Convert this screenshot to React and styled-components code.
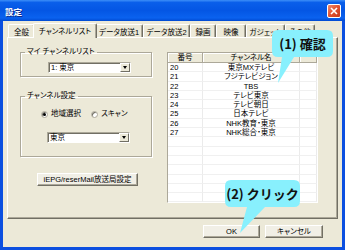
import React from 'react';
import styled, { createGlobalStyle } from 'styled-components';

const FONT = `"Liberation Sans", "Noto Sans CJK JP", sans-serif`;

const GlobalStyle = createGlobalStyle`
  html, body { margin: 0; padding: 0; background: #fff; }
  * { box-sizing: border-box; }
`;

const Window = styled.div`
  position: relative;
  width: 345px;
  height: 250px;
  display: flex;
  flex-direction: column;
  overflow: hidden;
  font-family: ${FONT};
  font-size: 7.5px;
  font-feature-settings: "palt";
  color: #000;
`;

const TitleBar = styled.div`
  height: 21px;
  flex: none;
  display: flex;
  align-items: center;
  justify-content: space-between;
  padding: 0 4px 0 5px;
  background: linear-gradient(#3d8ff8 0%, #0a5fea 12%, #0456e4 50%, #0a62ef 85%, #004ad2 100%);
`;

const Title = styled.span`
  color: #fff;
  font-weight: bold;
  font-size: 8.5px;
  font-family: "Noto Sans CJK JP", sans-serif;
  text-shadow: 1px 1px 0 #0a2a8a;
`;

const CloseButton = styled.div`
  width: 14px;
  height: 14px;
  border: 1px solid #fff;
  border-radius: 2px;
  background: linear-gradient(135deg, #f08a6c 0%, #e2512f 50%, #c53a1a 100%);
  display: flex;
  align-items: center;
  justify-content: center;
`;

const Frame = styled.div`
  flex: 1;
  display: flex;
  flex-direction: column;
  background: #ece9d8;
  border: 3px solid #0b4fe0;
  border-top: none;
  padding: 2px 4px 0 4px;
`;

const TabStrip = styled.div`
  height: 14px;
  display: flex;
  align-items: flex-end;
  padding-left: 1px;
  position: relative;
  z-index: 1;
`;

const Tab = styled.div`
  width: ${p => p.$w}px;
  height: ${p => (p.$active ? 15 : 13)}px;
  margin: ${p => (p.$active ? '0 -2px -1px -2px' : '0')};
  display: flex;
  align-items: center;
  justify-content: center;
  white-space: nowrap;
  background: #ece9d8;
  border-top: 1px solid #fff;
  border-left: 1px solid #fff;
  border-right: 1px solid #716f64;
  box-shadow: inset -1px 0 0 #aca899;
  border-radius: 2px 2px 0 0;
  position: relative;
  z-index: ${p => (p.$active ? 2 : 1)};
  padding-bottom: ${p => (p.$active ? 2 : 0)}px;
`;

const TabPanel = styled.div`
  height: 182px;
  display: flex;
  gap: 15px;
  padding: 10px 0 0 12px;
  border: 1px solid;
  border-color: #fff #716f64 #716f64 #fff;
  box-shadow: inset -1px -1px 0 #aca899;
`;

const LeftCol = styled.div`
  width: 132px;
  display: flex;
  flex-direction: column;
`;

const Group = styled.fieldset`
  margin: ${p => p.$mt || 0}px 0 0 0;
  padding: 0 0 ${p => p.$pb}px 0;
  border: 1px solid #aca899;
  box-shadow: inset 1px 1px 0 #fff, 1px 1px 0 #fff;
  min-width: 0;
`;

const Legend = styled.legend`
  margin-left: 4px;
  padding: 0 2px;
  line-height: 8px;
  font-size: 7.5px;
`;

const Select = styled.div`
  margin: ${p => p.$mt}px 0 0 ${p => p.$ml}px;
  width: 83px;
  height: 11px;
  display: flex;
  background: #fff;
  border: 1px solid;
  border-color: #aca899 #fff #fff #aca899;
  box-shadow: inset 1px 1px 0 #716f64;
`;

const SelectText = styled.span`
  flex: 1;
  padding-left: 2px;
  line-height: 9px;
`;

const SelectArrow = styled.div`
  width: 10px;
  height: 9px;
  background: #ece9d8;
  border: 1px solid;
  border-color: #fff #716f64 #716f64 #fff;
  display: flex;
  align-items: center;
  justify-content: center;
  &::after {
    content: '';
    border-left: 2.5px solid transparent;
    border-right: 2.5px solid transparent;
    border-top: 3px solid #000;
  }
`;

const RadioRow = styled.div`
  margin-top: 10px;
  height: 8px;
  display: flex;
  align-items: center;
  padding-left: 20px;
  gap: 10px;
`;

const RadioItem = styled.label`
  display: flex;
  align-items: center;
  gap: 3px;
  line-height: 8px;
`;

const RadioDot = styled.span`
  width: 7px;
  height: 7px;
  border-radius: 50%;
  background: #fff;
  border: 1px solid #aca899;
  box-shadow: inset 1px 1px 0 #716f64;
  display: flex;
  align-items: center;
  justify-content: center;
  &::after {
    content: '';
    width: 3px;
    height: 3px;
    border-radius: 50%;
    background: ${p => (p.$on ? '#000' : 'transparent')};
  }
`;

const Button = styled.div`
  width: ${p => p.$w}px;
  height: 13px;
  display: flex;
  align-items: center;
  justify-content: center;
  white-space: nowrap;
  background: #f1efe6;
  border: 1px solid;
  border-color: #fff #716f64 #716f64 #fff;
  box-shadow: inset -1px -1px 0 #aca899;
  margin-left: ${p => p.$ml || 0}px;
  margin-top: ${p => p.$mt || 0}px;
  line-height: 11px;
`;

const ListView = styled.div`
  margin-top: 4px;
  width: 151px;
  height: 151px;
  background: #fff;
  border: 1px solid;
  border-color: #aca899 #fff #fff #aca899;
  overflow: hidden;
`;

const Row = styled.div`
  display: grid;
  grid-template-columns: 35px 97px 1fr;
  height: ${p => (p.$head ? 10 : 9.3)}px;
  line-height: 9px;
`;

const HeadCell = styled.div`
  background: #ece9d8;
  border-right: 1px solid #aca899;
  border-bottom: 1px solid #aca899;
  box-shadow: inset 1px 1px 0 #fff;
  text-align: center;
  white-space: nowrap;
`;

const Cell = styled.div`
  border-right: 1px solid #ebebeb;
  border-bottom: 1px solid #f0f0f0;
  text-align: ${p => p.$align || 'left'};
  padding-left: ${p => (p.$align === 'center' ? 0 : 2)}px;
  white-space: nowrap;
  overflow: hidden;
`;

const ButtonBar = styled.div`
  margin-top: 6px;
  display: flex;
  justify-content: flex-end;
  gap: 5px;
  padding-right: 15px;
`;

const Bubble = styled.div`
  position: absolute;
  left: ${p => p.$x}px;
  top: ${p => p.$y}px;
  width: ${p => p.$w}px;
  height: ${p => p.$h}px;
  display: flex;
  align-items: center;
  justify-content: center;
  font-family: "Noto Sans CJK JP", sans-serif;
  font-feature-settings: normal;
  font-weight: bold;
  font-size: 13px;
  color: #111;
  z-index: 5;
  svg {
    position: absolute;
    left: 0;
    top: 0;
    overflow: visible;
  }
  span { position: relative; }
`;

function Callout({ x, y, w, h, tail, children }) {
  const r = 6;
  const [b1, b2, tx, ty] = tail;
  const d = `M${r},0 H${w - r} Q${w},0 ${w},${r} V${h - r} Q${w},${h} ${w - r},${h} H${b2} L${tx},${ty} L${b1},${h} H${r} Q0,${h} 0,${h - r} V${r} Q0,0 ${r},0 Z`;
  return (
    <Bubble $x={x} $y={y} $w={w} $h={h}>
      <svg width={w} height={h}>
        <path d={d} fill="#88f0fd" />
      </svg>
      <span>{children}</span>
    </Bubble>
  );
}

const tabs = [
  ['全般', 27],
  ['チャンネルリスト', 64, true],
  ['データ放送1', 48],
  ['データ放送2', 47],
  ['録画', 26],
  ['映像', 30],
  ['ガジェット', 39],
  ['その他', 30],
];

const channels = [
  ['20', '東京MXテレビ'],
  ['21', 'フジテレビジョン'],
  ['22', 'TBS'],
  ['23', 'テレビ東京'],
  ['24', 'テレビ朝日'],
  ['25', '日本テレビ'],
  ['26', 'NHK教育・東京'],
  ['27', 'NHK総合・東京'],
];

export default function App() {
  const rows = [...channels];
  while (rows.length < 15) rows.push(['', '']);

  return (
    <>
      <GlobalStyle />
      <Window>
        <TitleBar>
          <Title>設定</Title>
          <CloseButton>
            <svg width="8" height="8" viewBox="0 0 8 8">
              <path d="M1 1 L7 7 M7 1 L1 7" stroke="#fff" strokeWidth="1.6" />
            </svg>
          </CloseButton>
        </TitleBar>
        <Frame>
          <TabStrip>
            {tabs.map(([label, w, active]) => (
              <Tab key={label} $w={w} $active={active}>{label}</Tab>
            ))}
          </TabStrip>
          <TabPanel>
            <LeftCol>
              <Group $pb={3}>
                <Legend>マイ チャンネルリスト</Legend>
                <Select $mt={6} $ml={27}>
                  <SelectText>1: 東京</SelectText>
                  <SelectArrow />
                </Select>
              </Group>
              <Group $mt={15} $pb={13}>
                <Legend>チャンネル設定</Legend>
                <RadioRow>
                  <RadioItem><RadioDot $on />地域選択</RadioItem>
                  <RadioItem><RadioDot />スキャン</RadioItem>
                </RadioRow>
                <Select $mt={14} $ml={26}>
                  <SelectText>東京</SelectText>
                  <SelectArrow />
                </Select>
              </Group>
              <Button $w={101} $ml={17} $mt={16}>iEPG/reserMail放送局設定</Button>
            </LeftCol>
            <ListView>
              <Row $head>
                <HeadCell>番号</HeadCell>
                <HeadCell>チャンネル名</HeadCell>
                <HeadCell />
              </Row>
              {rows.map(([no, name], i) => (
                <Row key={i}>
                  <Cell>{no}</Cell>
                  <Cell $align="center">{name}</Cell>
                  <Cell />
                </Row>
              ))}
            </ListView>
          </TabPanel>
          <ButtonBar>
            <Button $w={57}>OK</Button>
            <Button $w={58}>キャンセル</Button>
          </ButtonBar>
        </Frame>
        <Callout x={272} y={30} w={61} h={27} tail={[10, 22, 6, 53]}>(1) 確認</Callout>
        <Callout x={225} y={180} w={75} h={27} tail={[22, 40, 15, 53]}>(2) クリック</Callout>
      </Window>
    </>
  );
}
